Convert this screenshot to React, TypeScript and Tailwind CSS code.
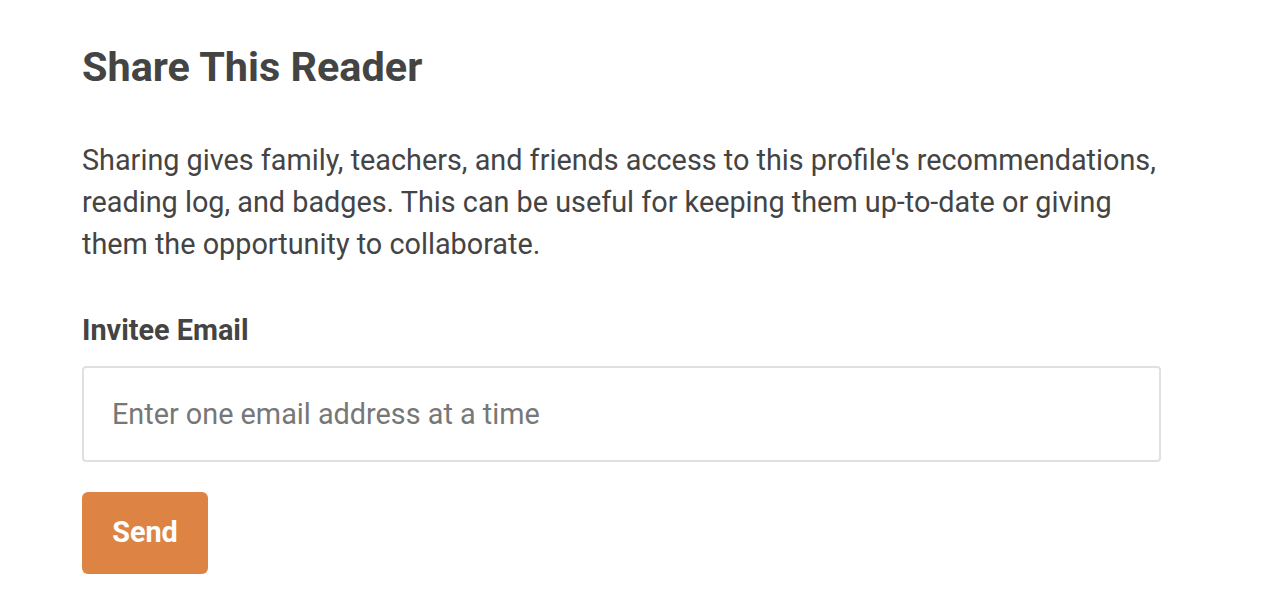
export default function App() {
  return (
    <div className="min-h-[612px] bg-white" style={{ fontFamily: "Roboto, 'Noto Sans', sans-serif" }}>
      <div className="pl-[82px] pt-[43px] w-[1161px]">
        <h1 className="text-[41.4px] leading-[48px] font-bold text-[#444444]">Share This Reader</h1>
        <p className="mt-[48px] text-[28.8px] leading-[42px] text-[#444444]">
          Sharing gives family, teachers, and friends access to this profile's recommendations, reading log, and badges. This can be useful for keeping them up-to-date or giving them the opportunity to collaborate.
        </p>
        <label className="block mt-[49px] text-[28.8px] leading-[32px] font-bold text-[#444444]">Invitee Email</label>
        <input
          type="email"
          placeholder="Enter one email address at a time"
          className="mt-[20px] block w-full h-[96px] border-2 border-[#e0e0e0] rounded-[4px] px-[28px] text-[28.8px] text-[#444444] placeholder:text-[#777777] outline-none"
        />
        <button className="mt-[30px] w-[126px] h-[82px] rounded-[6px] bg-[#dd8444] text-white text-[28.8px] font-bold">Send</button>
      </div>
    </div>
  );
}
